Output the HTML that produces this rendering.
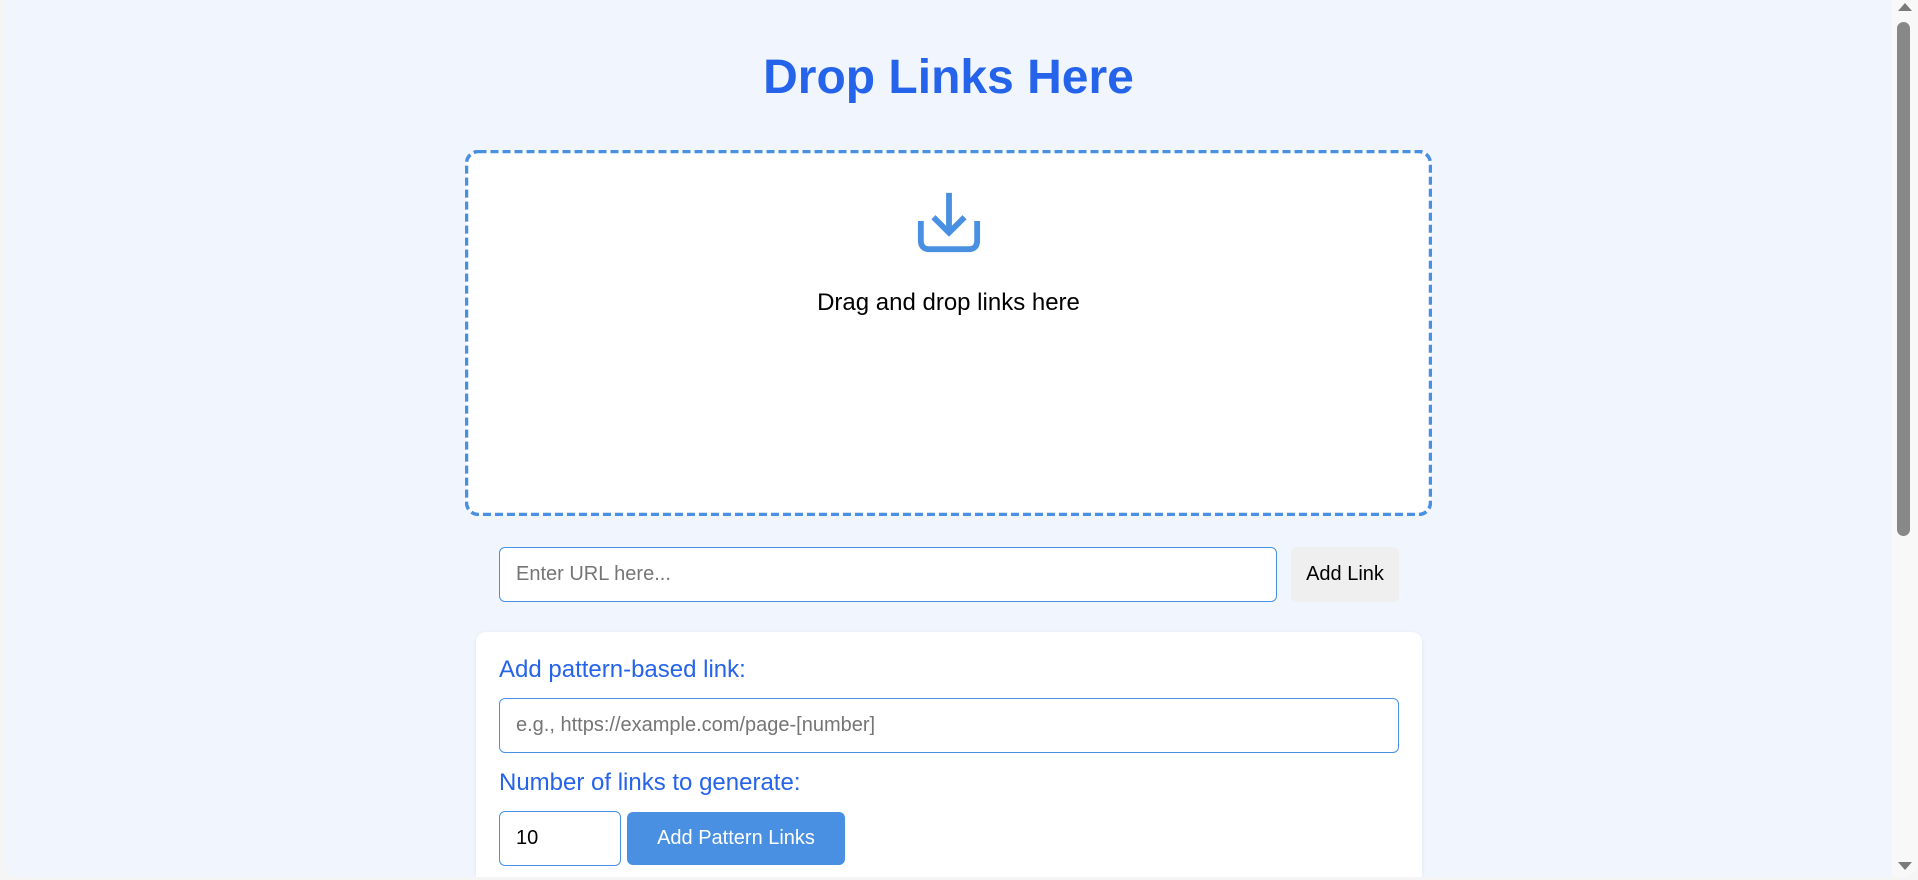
<!DOCTYPE html>
<html><head><meta charset="utf-8"><style>
html,body{margin:0;padding:0;width:1918px;height:880px;overflow:hidden;background:#f5f5f5;font-family:"Liberation Sans",Arial,sans-serif}
#frame{position:absolute;left:5px;top:0;width:1913px;height:877px;background:#fff;border-radius:0 0 14px 14px;overflow:hidden}
#page{position:absolute;left:0;top:0;width:1887px;height:877px;background:#f0f5fe}
#sb{position:absolute;left:1887px;top:0;width:26px;height:877px;background:#f8f8f8}
.abs{position:absolute;box-sizing:border-box}
h1{position:absolute;margin:0;left:0;width:1887px;text-align:center;top:50px;font-size:48px;line-height:56px;font-weight:bold;color:#2563eb}
.inp{background:#fff;border:1px solid #4a90e2;border-radius:6px;color:#757575;font-size:20px;padding-left:16px;display:flex;align-items:center}
.lbl{color:#2563eb;font-size:24px}
</style></head><body>
<div id="frame">
<div id="page">
<h1>Drop Links Here</h1>
<svg class="abs" style="left:460px;top:150px" width="967" height="366">
<rect x="1.5" y="1.5" width="964" height="363" rx="12" fill="#fff" stroke="#4a90e2" stroke-width="3.5" stroke-dasharray="8 4"/>
</svg>
<svg class="abs" style="left:908px;top:188px" width="72" height="68" viewBox="0 0 74 70">
<g fill="none" stroke="#4a90e2" stroke-width="6" stroke-linecap="butt" stroke-linejoin="miter">
<path d="M37 5 V46"/><path d="M21 30 L37 46 L53 30"/>
<path d="M8 34 V54 Q8 63 17 63 H57 Q66 63 66 54 V34"/>
</g></svg>
<div class="abs" style="left:0;width:1887px;top:289px;text-align:center;font-size:24px;line-height:28px;color:#000">Drag and drop links here</div>
<div class="abs inp" style="left:494px;top:547px;width:778px;height:55px">Enter URL here...</div>
<div class="abs" style="left:1286px;top:547px;width:108px;height:55px;background:#efefef;border-radius:6px;font-size:20px;display:flex;align-items:center;justify-content:center;color:#000">Add Link</div>
<div class="abs" style="left:471px;top:632px;width:946px;height:260px;background:#fff;border-radius:10px;box-shadow:0 1px 4px rgba(0,0,0,0.06)"></div>
<div class="abs lbl" style="left:494px;top:655px;line-height:30px">Add pattern-based link:</div>
<div class="abs inp" style="left:494px;top:698px;width:900px;height:55px">e.g., https://example.com/page-[number]</div>
<div class="abs lbl" style="left:494px;top:768px;line-height:30px">Number of links to generate:</div>
<div class="abs inp" style="left:494px;top:811px;width:122px;height:55px;color:#000">10</div>
<div class="abs" style="left:622px;top:812px;width:218px;height:53px;background:#4a90e2;border-radius:6px;color:#fff;font-size:20px;display:flex;align-items:center;justify-content:center">Add Pattern Links</div>
</div>
<div id="sb">
<svg class="abs" style="left:0;top:0" width="26" height="877">
<path d="M6 11 L13 3 L20 11 Z" fill="#7a7a7a"/>
<rect x="5" y="22" width="13" height="514" rx="6.5" fill="#888"/>
<path d="M6 862 L13 870 L20 862 Z" fill="#7a7a7a"/>
</svg>
</div>
</div>
</body></html>
